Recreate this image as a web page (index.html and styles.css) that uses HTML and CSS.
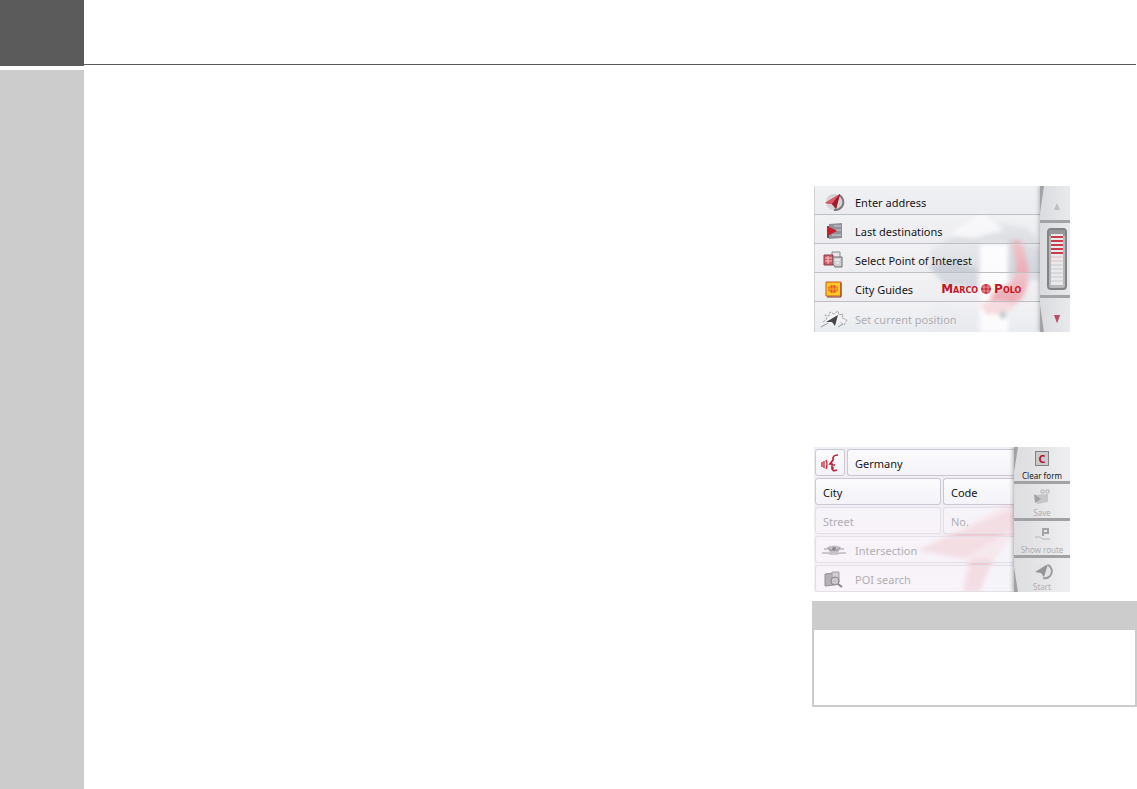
FILE: index.html
```html
<!DOCTYPE html>
<html lang="en">
<head>
  <meta charset="UTF-8">
  <title>Navigation</title>
  <meta name="viewport" content="width=device-width, initial-scale=1.0">
  <link rel="stylesheet" href="styles.css">
</head>
<body>

  <header>
    <div class="tab"></div>
    <div class="rule"></div>
  </header>

  <div class="page">
    <aside></aside>

    <main>
      <div class="column">

        <section class="screen destination">
          <svg class="art" viewBox="0 0 256 146" aria-hidden="true">
            <path d="M116 64L150 44L182 36L214 42L228 60V84L190 88L120 84Z" fill="#d9dbe0"/>
            <path d="M134 50L168 26L190 44L160 52Z" fill="#f5f5f8"/>
            <path d="M114 80L140 74L164 84V102L130 98Z" fill="#c3c8d2"/>
            <path d="M166 58H194V146H166Z" fill="#fbfbfd"/>
            <path d="M194 54L226 62V94H194Z" fill="#ccd0d8"/>
            <path d="M198 56Q205 50 210 62L214 82Q216 100 208 112Q198 124 178 122Q172 110 186 102Q204 96 202 78Z" fill="#e9a3ae"/>
            <path d="M166 118Q188 110 202 120L190 128H172Z" fill="#f2ccd3"/>
            <path d="M186 126H192V132H186Z" fill="#a9b0b2"/>
            <path d="M118 116L164 122V146H110Z" fill="#e6e7ec"/>
          </svg>

          <div class="list">
            <button>
              <svg viewBox="0 0 28 20"><circle cx="14" cy="10" r="8" fill="#d2d2d4"/><path d="M19 3A8 8 0 0 1 14 18" fill="none" stroke="#77777a" stroke-width="2"/><path d="M5 11L20 2L16 17L12 12Z" fill="#b82435"/><path d="M5 11L20 2L12 12Z" fill="#dd5865"/><path d="M12 12L20 2L16 17Z" fill="#a01c2c"/></svg>
              Enter address
            </button>
            <button>
              <svg viewBox="0 0 28 20"><path d="M9 3L22 2V17L9 18Z" fill="#8e9297"/><path d="M14 5H21M16 9H21M12 14H21" stroke="#d2d3d6"/><path d="M8 5V17" stroke="#555" stroke-width="2"/><path d="M7 5L17 10L7 15Z" fill="#c81d2b"/></svg>
              Last destinations
            </button>
            <button>
              <svg viewBox="0 0 28 20"><path d="M12 2H20V12H12Z" fill="#e6e6e8" stroke="#88888b"/><path d="M4 5H13V15H4Z" fill="#d05a66" stroke="#8d3e49"/><path d="M5 8H12M5 11H12M8 6V14" stroke="#f3c7ca"/><path d="M13 7H22V17H15L13 14Z" fill="#cfcfd2" stroke="#6c6c70"/><path d="M15 10H20M16 13H19" stroke="#fff"/></svg>
              Select Point of Interest
            </button>
            <button>
              <svg viewBox="0 0 28 20"><path d="M6 3H21V17H6Z" fill="#fccb22" stroke="#c9542d"/><path d="M21 4V18H7" fill="none" stroke="#8d3a26"/><ellipse cx="13" cy="10" rx="5" ry="4" fill="#e4592a"/><path d="M8 10H18M13 6V14M10 7V13M16 7V13" stroke="#fccb22" stroke-width="0.7"/></svg>
              City Guides
              <span class="brand">Marco
                <svg viewBox="0 0 12 12"><circle cx="6" cy="6" r="5" fill="#c9303c"/><path d="M1 4H11M1 8H11M4 1V11M8 1V11" stroke="#f3ccd0" stroke-width="0.6"/></svg>
                Polo</span>
            </button>
            <button disabled>
              <svg viewBox="0 0 28 20"><path d="M3 13L7 10L5 6L9 7L10 3L14 5L18 2L19 6L23 5L22 9L27 11L24 16L20 13" fill="#f2f2f3" stroke="#a6a6a9" stroke-dasharray="3 1"/><path d="M1 18L8 14M18 18L23 15" stroke="#99999c"/><path d="M6 13L18 6L15 17L12 13Z" fill="#45474a"/></svg>
              Set current position
            </button>
          </div>

          <div class="scroller">
            <button aria-label="Up" disabled><svg viewBox="0 0 12 12"><path d="M3 9L6 2L9 9Z" fill="#c0c0c4"/></svg></button>
            <div class="track">
              <svg viewBox="0 0 20 62">
                <rect x="1" y="1" width="18" height="60" rx="3" fill="#b9b9bc" stroke="#838386" stroke-width="2"/>
                <rect x="2" y="2" width="16" height="6" fill="#97979a"/>
                <rect x="4" y="6" width="12" height="51" fill="#e9e9eb"/>
                <path d="M4 9H16M4 13H16M4 17H16M4 21H16M4 25H16" stroke="#c93e4c" stroke-width="2"/>
                <path d="M4 29H16M4 33H16" stroke="#e3bcc2"/>
                <path d="M4 37H16M4 41H16M4 45H16M4 49H16M4 53H16" stroke="#c9c9cc"/>
              </svg>
            </div>
            <button aria-label="Down"><svg viewBox="0 0 12 12"><path d="M3 2L9 2L6 10Z" fill="#d0425a"/><path d="M6 2V10L9 2Z" fill="#94606e"/></svg></button>
          </div>
        </section>

        <section class="screen address">
          <svg class="art" viewBox="0 0 256 146" aria-hidden="true">
            <path d="M202 54V112L178 112L164 146H148L154 114L104 104Z" fill="#f3dce2"/>
            <path d="M104 104L202 62V80L150 112Z" fill="#edcbd3"/>
            <path d="M158 112H180L166 146H150Z" fill="#edc9d2"/>
            <path d="M182 112L202 84V146H170Z" fill="#eef1f5"/>
          </svg>

          <div class="form">
            <div class="fields country">
              <button aria-label="Speech input"><svg viewBox="0 0 20 20" fill="none" stroke="#bd2238"><path d="M2 9V14M4 8V15M6 7Q8 11 6 16" stroke-width="1.3"/><path d="M18 2Q12 2 13 7L10 11H12V12H15M12 13V15H14M12 15Q12 19 17 17" stroke-width="1.7"/></svg></button>
              <button>Germany</button>
            </div>
            <div class="fields">
              <button>City</button>
              <button>Code</button>
            </div>
            <div class="fields">
              <button disabled>Street</button>
              <button disabled>No.</button>
            </div>
            <div class="fields wide">
              <button disabled><svg viewBox="0 0 28 20"><path d="M2 12H8L11 13H17L20 12H26M4 8H8M20 8H24" fill="none" stroke="#bdb8c0" stroke-width="1.5"/><path d="M7 6Q14 3 21 6L18 12H10Z" fill="#c4bfc7"/><path d="M8 7L12 10M20 7L16 10" stroke="#8f8a92"/><circle cx="14" cy="8" r="2" fill="#8b858e"/></svg>Intersection</button>
            </div>
            <div class="fields wide">
              <button disabled><svg viewBox="0 0 28 20"><path d="M5 4L14 3V15L5 16Z" fill="#b4b0b6" stroke="#949096"/><path d="M12 2H19V13H12Z" fill="#d2cdd4" stroke="#a19ca2"/><circle cx="15" cy="11" r="4" fill="#cbc6cd" stroke="#88848a"/><path d="M18 14L22 17" stroke="#88848a" stroke-width="2"/></svg>POI search</button>
            </div>
          </div>

          <div class="actions">
            <button><span class="clear">C</span>Clear form</button>
            <button disabled><svg viewBox="0 0 24 18"><path d="M4 7L18 6V14L7 16Z" fill="#c6c5c7"/><path d="M4 6L11 11L5 15Z" fill="#a2a2a4"/><path d="M11 2H14V5H11ZM16 2H19V5H16Z" fill="none" stroke="#b5b5b7"/></svg>Save</button>
            <button disabled><svg viewBox="0 0 24 18"><path d="M13 3V11M13 4H18V8H13" fill="none" stroke="#a5a5a7" stroke-width="2"/><path d="M5 12H10L12 14H20" fill="none" stroke="#b5b5b7"/></svg>Show route</button>
            <button disabled><svg viewBox="0 0 24 18"><circle cx="13" cy="9" r="7" fill="#e2e1e4"/><path d="M18 3A7 7 0 0 1 13 16" fill="none" stroke="#9c9c9f" stroke-width="2"/><path d="M5 10L18 2L14 15L11 11Z" fill="#949497"/></svg>Start</button>
          </div>
        </section>

        <div class="note">
          <div class="note-head"></div>
          <div class="note-body"></div>
        </div>

      </div>
    </main>
  </div>

</body>
</html>
```
FILE: styles.css
```css
* {
  box-sizing: border-box;
}
body {
  margin: 0;
  min-height: 100vh;
  display: flex;
  flex-direction: column;
  background: #fff;
  font-family: "Noto Sans", "Open Sans", sans-serif;
  font-size: 11px;
  color: #161618;
}
button {
  margin: 0;
  padding: 0;
  border: none;
  background: transparent;
  font: inherit;
  color: inherit;
  text-align: left;
  white-space: nowrap;
}
button:disabled {
  color: #b0aeb3;
}
header {
  display: flex;
  height: 66px;
}
.tab {
  width: 84px;
  background: #5b5b5b;
}
.rule {
  flex: 1;
  margin: 0 1px 1px 0;
  border-bottom: 1px solid #5b5b5b;
}
.page {
  flex: 1;
  display: flex;
  margin-top: 4px;
}
aside {
  width: 84px;
  background: #ccc;
}
main {
  flex: 1;
  display: flex;
  justify-content: flex-end;
  padding-top: 116px;
}
.column {
  width: 325px;
}

/* device screens */
.screen {
  position: relative;
  display: flex;
  width: 256px;
  height: 146px;
  margin-left: 2px;
  overflow: hidden;
}
.art {
  position: absolute;
  inset: 0;
  width: 100%;
  height: 100%;
  filter: blur(2px);
}
.destination {
  background: linear-gradient(#e9eaee, #ececf0 80%, #e6eaed);
}
.list {
  position: relative;
  flex: 1;
  display: grid;
  grid-template-rows: repeat(4, 29px) 1fr;
}
.list button {
  display: flex;
  align-items: center;
  gap: 7px;
  padding: 4px 0 0 5px;
  border-bottom: 1px solid #bebec3;
  border-left: 1px solid #d3d3d7;
  background: linear-gradient(rgba(255,255,255,0.35), rgba(255,255,255,0.1));
}
.list button:last-child {
  border-bottom: none;
}
.list button > svg {
  width: 28px;
  height: 20px;
}
.brand {
  display: flex;
  align-items: center;
  gap: 2px;
  margin-left: 21px;
  font-family: "DejaVu Sans", sans-serif;
  font-size: 12px;
  line-height: 12px;
  font-weight: bold;
  font-variant: small-caps;
  color: #c41625;
}
.brand svg {
  width: 12px;
  height: 12px;
}
.scroller {
  position: relative;
  display: flex;
  flex-direction: column;
  gap: 3px;
  width: 30px;
  background: #a3a3a6;
  box-shadow: -1px 0 4px rgba(0,0,0,0.25);
}
.scroller button,
.track {
  display: flex;
  align-items: center;
  justify-content: center;
  background: linear-gradient(90deg, #dadbde, #e9eaec);
}
.scroller button {
  flex: 1;
  padding: 8px 0 0 4px;
}
.scroller button:first-child {
  clip-path: polygon(4px 0, 100% 0, 100% 100%, 0 100%, 0 80%);
}
.scroller button:last-child {
  clip-path: polygon(0 0, 100% 0, 100% 100%, 4px 100%, 0 20%);
}
.scroller button svg {
  width: 12px;
  height: 12px;
}
.track {
  height: 72px;
  padding-left: 4px;
}
.track svg {
  width: 20px;
  height: 62px;
}

.address {
  height: 145px;
  margin-top: 115px;
  background: linear-gradient(#efedf3, #f6f0f7);
}
.form {
  position: relative;
  flex: 1;
  display: grid;
  grid-template-rows: repeat(5, 27px);
  gap: 2px;
  padding: 2px 0 0 1px;
}
.fields {
  display: grid;
  grid-template-columns: 126px 1fr;
  gap: 2px;
}
.fields button {
  display: flex;
  align-items: center;
  padding: 2px 0 0 7px;
  border: 1px solid #cbc8d1;
  border-radius: 3px;
  background: linear-gradient(#fbfbfd, #f4f3f9);
}
.fields button:last-child {
  border-right: none;
  border-radius: 3px 0 0 3px;
}
.fields button:disabled {
  border-color: #e4dfe7;
  background: rgba(252,249,254,0.4);
}
.country {
  grid-template-columns: 30px 1fr;
}
.country button:first-child {
  justify-content: center;
  padding: 0;
  border-right: 1px solid #cbc8d1;
}
.country svg {
  width: 20px;
  height: 20px;
}
.wide {
  grid-template-columns: 1fr;
}
.wide button {
  gap: 7px;
  padding-left: 4px;
}
.wide svg {
  width: 28px;
  height: 20px;
}
.actions {
  position: relative;
  display: grid;
  grid-template-rows: repeat(4, 1fr);
  gap: 3px;
  width: 56px;
  background: #a2a1a4;
  box-shadow: -1px 0 4px rgba(0,0,0,0.3);
}
.actions button {
  display: flex;
  flex-direction: column;
  align-items: center;
  justify-content: flex-end;
  gap: 2px;
  background: linear-gradient(90deg, #dddcdf, #efeef0);
  font-size: 8px;
  line-height: 10px;
}
.actions button:first-child {
  clip-path: polygon(4px 0, 100% 0, 100% 100%, 0 100%, 0 75%);
}
.actions button:last-child {
  clip-path: polygon(0 0, 100% 0, 100% 100%, 4px 100%, 0 25%);
}
.actions svg {
  width: 24px;
  height: 18px;
}
.clear {
  width: 14px;
  height: 15px;
  margin-bottom: 3px;
  border: 1px solid #828285;
  background: #cbcbcd;
  font-size: 11px;
  line-height: 13px;
  font-weight: bold;
  text-align: center;
  color: #b50f22;
}

/* note box */
.note {
  margin-top: 9px;
  border: 2px solid #ccc;
}
.note-head {
  height: 27px;
  background: #ccc;
}
.note-body {
  height: 75px;
}
```
